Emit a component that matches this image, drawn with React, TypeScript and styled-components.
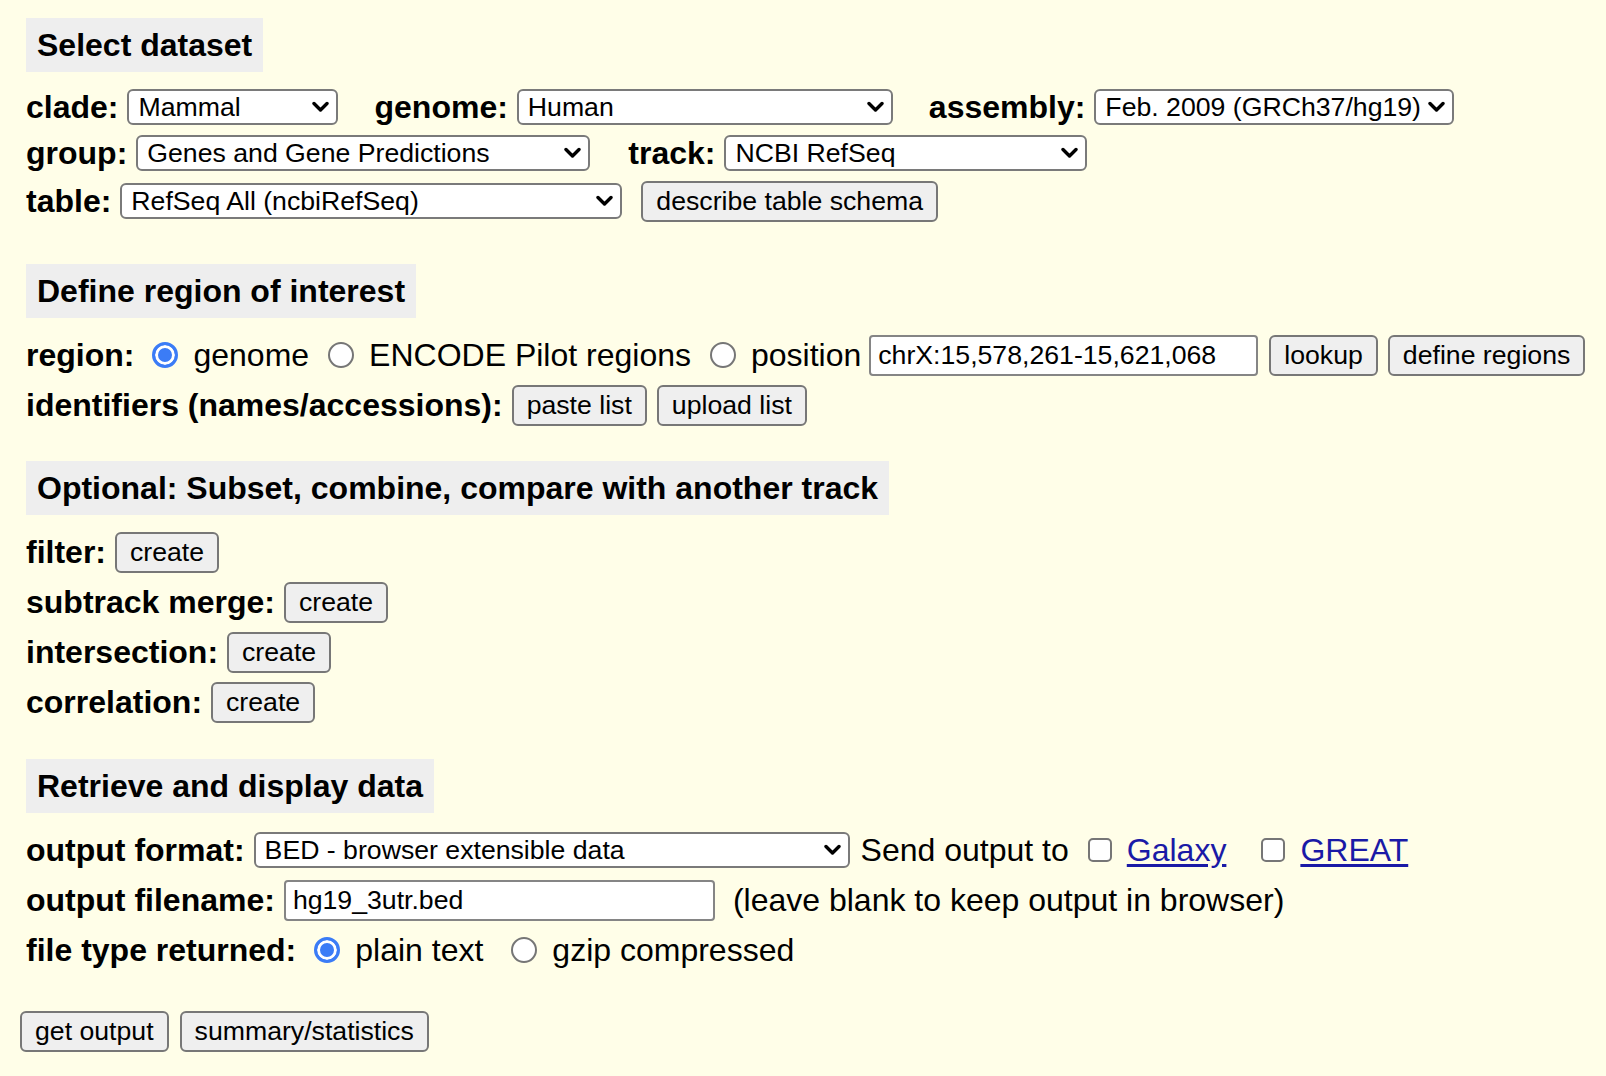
import React from "react";
import styled, { createGlobalStyle } from "styled-components";

const GlobalStyle = createGlobalStyle`
  html, body {
    margin: 0;
    padding: 0;
    background: #fffee8;
  }
  body {
    font-family: "Liberation Sans", Arial, sans-serif;
    color: #000;
  }
`;

const Page = styled.div`
  padding: 18px 0 30px 26px;
  min-height: 1076px;
  box-sizing: border-box;
`;

const Section = styled.section<{ $top?: number }>`
  margin-top: ${(p) => p.$top ?? 0}px;
  display: flex;
  flex-direction: column;
  align-items: flex-start;
`;

const Heading = styled.h2`
  margin: 0 0 12px;
  height: 54px;
  padding: 0 11px;
  display: flex;
  align-items: center;
  background: #eeeeee;
  font-size: 32px;
  font-weight: bold;
`;

const Row = styled.div<{ $h?: number }>`
  display: flex;
  align-items: center;
  height: ${(p) => p.$h ?? 50}px;
  white-space: nowrap;
`;

const Label = styled.span<{ $gap?: number; $lead?: number }>`
  font-size: 32px;
  font-weight: bold;
  margin-left: ${(p) => p.$lead ?? 0}px;
  margin-right: ${(p) => p.$gap ?? 9}px;
`;

const Text = styled.span<{ $gap?: number; $lead?: number }>`
  font-size: 32px;
  margin-left: ${(p) => p.$lead ?? 0}px;
  margin-right: ${(p) => p.$gap ?? 0}px;
`;

const Link = styled.a`
  font-size: 32px;
  color: #1a1aa6;
  text-decoration: underline;
  text-underline-offset: 3px;
`;

const SelectWrap = styled.span<{ $w: number }>`
  position: relative;
  display: inline-flex;
  width: ${(p) => p.$w}px;
`;

const NativeSelect = styled.select`
  appearance: none;
  width: 100%;
  height: 36px;
  box-sizing: border-box;
  padding: 0 28px 0 9px;
  border: 2px solid #7a7a7a;
  border-radius: 6px;
  background: #fff;
  font-family: "Liberation Sans", Arial, sans-serif;
  font-size: 26.67px;
  color: #000;
`;

const Chevron = styled.svg`
  position: absolute;
  right: 9px;
  top: 50%;
  transform: translateY(-50%);
  pointer-events: none;
`;

const Button = styled.button`
  height: 41px;
  padding: 0 13px;
  border: 2px solid #777;
  border-radius: 6px;
  background: #efefef;
  font-family: "Liberation Sans", Arial, sans-serif;
  font-size: 26.67px;
  color: #000;
`;

const ButtonGroup = styled.span<{ $lead?: number }>`
  display: inline-flex;
  gap: 10px;
  margin-left: ${(p) => p.$lead ?? 0}px;
`;

const TextInput = styled.input<{ $w: number }>`
  width: ${(p) => p.$w}px;
  height: 41px;
  box-sizing: border-box;
  padding: 0 7px;
  border: 2px solid #858585;
  border-radius: 4px;
  background: #fff;
  font-family: "Liberation Sans", Arial, sans-serif;
  font-size: 26.67px;
  color: #000;
`;

const Radio = styled.input.attrs({ type: "radio" })<{ $lead?: number }>`
  appearance: none;
  width: 26px;
  height: 26px;
  margin: 0 15px 0 ${(p) => p.$lead ?? 18}px;
  box-sizing: border-box;
  border-radius: 50%;
  border: 2px solid #767676;
  background: #fff;

  &:checked {
    border: 3px solid #3b7cf6;
    background: #3b7cf6;
    box-shadow: inset 0 0 0 3px #fff;
  }
`;

const Checkbox = styled.input.attrs({ type: "checkbox" })<{ $lead?: number }>`
  appearance: none;
  width: 24px;
  height: 24px;
  margin: 0 15px 0 ${(p) => p.$lead ?? 19}px;
  box-sizing: border-box;
  border: 2px solid #767676;
  border-radius: 5px;
  background: #fff;
`;

const FinalRow = styled.div`
  display: flex;
  gap: 11px;
  margin: 36px 0 0 -6px;
`;

type SelectProps = { w: number; value: string };

const Select = ({ w, value }: SelectProps) => (
  <SelectWrap $w={w}>
    <NativeSelect defaultValue={value}>
      <option>{value}</option>
    </NativeSelect>
    <Chevron width="17" height="12" viewBox="0 0 17 12">
      <polyline
        points="2,2.5 8.5,9 15,2.5"
        fill="none"
        stroke="#000"
        strokeWidth="3.4"
        strokeLinecap="round"
        strokeLinejoin="round"
      />
    </Chevron>
  </SelectWrap>
);

export default function App() {
  return (
    <Page>
      <GlobalStyle />

      <Section>
        <Heading>Select dataset</Heading>
        <Row $h={46}>
          <Label>clade:</Label>
          <Select w={211} value="Mammal" />
          <Label $lead={36}>genome:</Label>
          <Select w={376} value="Human" />
          <Label $lead={36}>assembly:</Label>
          <Select w={360} value="Feb. 2009 (GRCh37/hg19)" />
        </Row>
        <Row $h={46}>
          <Label>group:</Label>
          <Select w={454} value="Genes and Gene Predictions" />
          <Label $lead={38}>track:</Label>
          <Select w={363} value="NCBI RefSeq" />
        </Row>
        <Row $h={50}>
          <Label>table:</Label>
          <Select w={502} value="RefSeq All (ncbiRefSeq)" />
          <ButtonGroup $lead={19}>
            <Button>describe table schema</Button>
          </ButtonGroup>
        </Row>
      </Section>

      <Section $top={38}>
        <Heading>Define region of interest</Heading>
        <Row>
          <Label $gap={0}>region:</Label>
          <Radio name="region" defaultChecked />
          <Text>genome</Text>
          <Radio name="region" $lead={19} />
          <Text>ENCODE Pilot regions</Text>
          <Radio name="region" $lead={19} />
          <Text $gap={8}>position</Text>
          <TextInput $w={389} defaultValue="chrX:15,578,261-15,621,068" />
          <ButtonGroup $lead={11}>
            <Button>lookup</Button>
            <Button>define regions</Button>
          </ButtonGroup>
        </Row>
        <Row>
          <Label>identifiers (names/accessions):</Label>
          <ButtonGroup>
            <Button>paste list</Button>
            <Button>upload list</Button>
          </ButtonGroup>
        </Row>
      </Section>

      <Section $top={31}>
        <Heading>Optional: Subset, combine, compare with another track</Heading>
        <Row>
          <Label>filter:</Label>
          <Button>create</Button>
        </Row>
        <Row>
          <Label>subtrack merge:</Label>
          <Button>create</Button>
        </Row>
        <Row>
          <Label>intersection:</Label>
          <Button>create</Button>
        </Row>
        <Row>
          <Label>correlation:</Label>
          <Button>create</Button>
        </Row>
      </Section>

      <Section $top={32}>
        <Heading>Retrieve and display data</Heading>
        <Row>
          <Label>output format:</Label>
          <Select w={596} value="BED - browser extensible data" />
          <Text $lead={11}>Send output to</Text>
          <Checkbox />
          <Link href="#">Galaxy</Link>
          <Checkbox $lead={35} />
          <Link href="#">GREAT</Link>
        </Row>
        <Row>
          <Label>output filename:</Label>
          <TextInput $w={431} defaultValue="hg19_3utr.bed" />
          <Text $lead={18}>(leave blank to keep output in browser)</Text>
        </Row>
        <Row>
          <Label $gap={0}>file type returned:</Label>
          <Radio name="ftype" defaultChecked />
          <Text>plain text</Text>
          <Radio name="ftype" $lead={28} />
          <Text>gzip compressed</Text>
        </Row>
      </Section>

      <FinalRow>
        <Button>get output</Button>
        <Button>summary/statistics</Button>
      </FinalRow>
    </Page>
  );
}
